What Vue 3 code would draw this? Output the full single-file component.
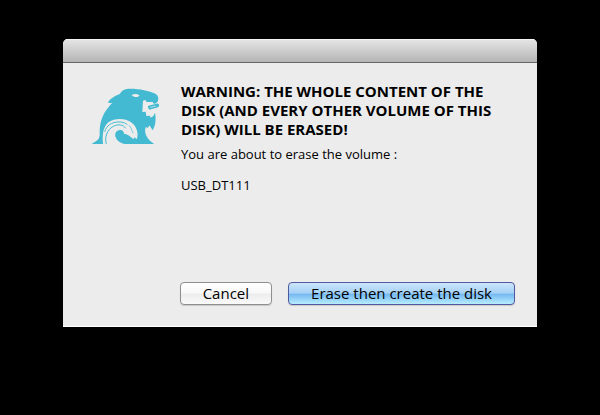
<script setup>
import { ref } from 'vue'

const volume = ref('USB_DT111')
const open = ref(true)

function close() {
  open.value = false
}
</script>

<template>
  <main class="desktop">
    <section v-if="open" class="dialog" role="alertdialog" aria-labelledby="title" aria-describedby="message">
      <div class="titlebar"></div>
      <div class="body">
        <svg class="logo" viewBox="21 24 204 171" aria-hidden="true">
          <path
            fill="#43bad2"
            d="M21 191C38 183 45 176 44 160C43 138 48 117 58 99C66 85 75 76 82 68C76 70 71 69 69 66C78 54 90 48 103 43C109 33 118 26 130 26C160 25 192 32 211 41C219 45 222 53 219 62C216 69 211 72 206 71L203 66L184 66L182 60L174 62L172 96L182 95L184 108L195 107L197 113L205 108L210 98C214 119 211 137 203 151C199 145 196 139 193 136C191 143 187 145 182 141C178 153 181 164 188 174C193 182 200 187 208 192L21 192Z"
          />
          <path
            fill="#ececec"
            d="M54 192C50 150 60 126 86 119C113 113 142 120 153 144C158 155 160 168 155 178L149 172L146 177C138 174 136 168 129 165C124 163 121 161 118 162C116 154 112 149 105 150C93 151 88 161 92 172C96 183 105 189 118 192Z"
          />
          <path
            fill="none"
            stroke="#43bad2"
            stroke-width="3"
            d="M64 192C58 172 66 149 85 139C101 131 115 134 122 145M59 155C64 137 80 127 97 126C110 125 120 128 127 134"
          />
          <path fill="none" stroke="#43bad2" stroke-width="2" d="M132 136C140 144 139 151 145 160" />
          <path fill="#ececec" d="M140 45C149 40 158 41 164 47C157 53 147 53 140 45Z" />
          <path
            fill="#43bad2"
            d="M189 78C197 74 207 73 215 71C220 70 225 75 221 80C214 85 204 85 198 88C193 91 188 86 189 78Z"
          />
          <path fill="none" stroke="#ececec" stroke-width="2" d="M195 82L213 78" />
        </svg>
        <div class="content">
          <h1 id="title">
            WARNING: THE WHOLE CONTENT OF THE DISK (AND EVERY OTHER VOLUME OF THIS DISK) WILL BE ERASED!
          </h1>
          <div id="message" class="message">
            <p>You are about to erase the volume :</p>
            <p>{{ volume }}</p>
          </div>
        </div>
      </div>
      <div class="actions">
        <button class="btn cancel" type="button" @click="close">Cancel</button>
        <button class="btn primary" type="button" @click="close">Erase then create the disk</button>
      </div>
    </section>
  </main>
</template>

<style>
body {
  background: #000;
}
</style>

<style scoped>
.desktop {
  padding: 39px 63px 88px;
  font-family: "Open Sans", "Noto Sans", sans-serif;
  color: #000;
}
.dialog {
  overflow: hidden;
  border-radius: 5px 5px 0 0;
  background: #ececec;
  box-shadow: inset 0 -1px 0 #fff;
}
.titlebar {
  height: 23px;
  border-bottom: 1px solid #666;
  background: linear-gradient(#e6e6e6, #b5b5b5);
  box-shadow: inset 0 1px 0 #f4f4f4;
}
.body {
  display: flex;
  gap: 21px;
  min-height: 200px;
  padding: 19px 30px 0 29px;
}
.logo {
  flex: none;
  width: 68px;
  height: 57px;
  margin-top: 6px;
}
h1 {
  margin: 0;
  font-size: 15px;
  line-height: 19px;
  font-weight: 700;
}
.message {
  display: grid;
  gap: 15px;
  margin-top: 7px;
  font-size: 13px;
  line-height: 16px;
}
p {
  margin: 0;
}
.actions {
  display: flex;
  justify-content: flex-end;
  gap: 16px;
  padding: 0 22px 22px;
}
.btn {
  height: 23px;
  padding: 0 22px 2px;
  border: 1px solid #8e8e8e;
  border-radius: 4px;
  background: linear-gradient(#fff, #f8f8f8 48%, #ececec 52%, #fafafa);
  box-shadow: 0 1px 1px rgba(0, 0, 0, 0.15);
  color: #000;
  font-family: inherit;
  font-size: 15px;
  line-height: 18px;
}
.primary {
  border-color: #5058a0;
  background: linear-gradient(#cde5fa, #a5d1f6 48%, #76b9f2 54%, #b8edff);
}
.btn:active {
  filter: brightness(0.9);
}
</style>
